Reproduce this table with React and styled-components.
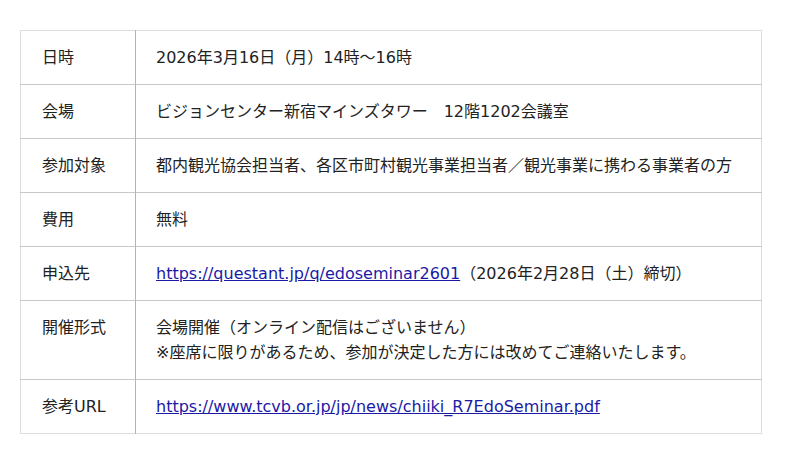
import React from 'react';
import styled, { createGlobalStyle } from 'styled-components';

const GlobalStyle = createGlobalStyle`
	html, body {
		margin: 0;
		padding: 0;
		background: #fff;
	}
	body {
		font-family: 'DejaVu Sans', 'Noto Sans CJK JP', sans-serif;
		color: #222;
	}
`;

const StyledPage = styled.div`
	padding: 30px 38px 30px 20px;
`;

const StyledTable = styled.table`
	width: 742px;
	border-collapse: collapse;
	border: 1px solid #dcdcdc;
	font-size: 16px;
	line-height: 25px;
`;

const StyledRow = styled.tr`
	border-top: 1px solid #c8c8c8;

	&:first-child {
		border-top: 1px solid #dcdcdc;
	}
`;

const StyledHead = styled.th`
	width: 73px;
	padding: 14px 20px 14px 21px;
	text-align: left;
	vertical-align: top;
	font-weight: normal;
	border-right: 1px solid #b4b4b4;
	white-space: nowrap;
`;

const StyledCell = styled.td`
	padding: 14px 20px;
	vertical-align: top;
`;

const StyledLink = styled.a`
	color: #1a1aa6;
	text-decoration: underline;
`;

const rows = [
	{ label: '日時', content: '2026年3月16日（月）14時〜16時' },
	{ label: '会場', content: 'ビジョンセンター新宿マインズタワー　12階1202会議室' },
	{ label: '参加対象', content: '都内観光協会担当者、各区市町村観光事業担当者／観光事業に携わる事業者の方' },
	{ label: '費用', content: '無料' },
	{
		label: '申込先',
		content: (
			<>
				<StyledLink href="#">https://questant.jp/q/edoseminar2601</StyledLink>
				（2026年2月28日（土）締切）
			</>
		),
	},
	{
		label: '開催形式',
		content: (
			<>
				会場開催（オンライン配信はございません）
				<br />
				※座席に限りがあるため、参加が決定した方には改めてご連絡いたします。
			</>
		),
	},
	{
		label: '参考URL',
		content: <StyledLink href="#">https://www.tcvb.or.jp/jp/news/chiiki_R7EdoSeminar.pdf</StyledLink>,
	},
];

const App = () => (
	<>
		<GlobalStyle />
		<StyledPage>
			<StyledTable>
				<tbody>
					{rows.map(({ label, content }) => (
						<StyledRow key={label}>
							<StyledHead>{label}</StyledHead>
							<StyledCell>{content}</StyledCell>
						</StyledRow>
					))}
				</tbody>
			</StyledTable>
		</StyledPage>
	</>
);

export default App;
